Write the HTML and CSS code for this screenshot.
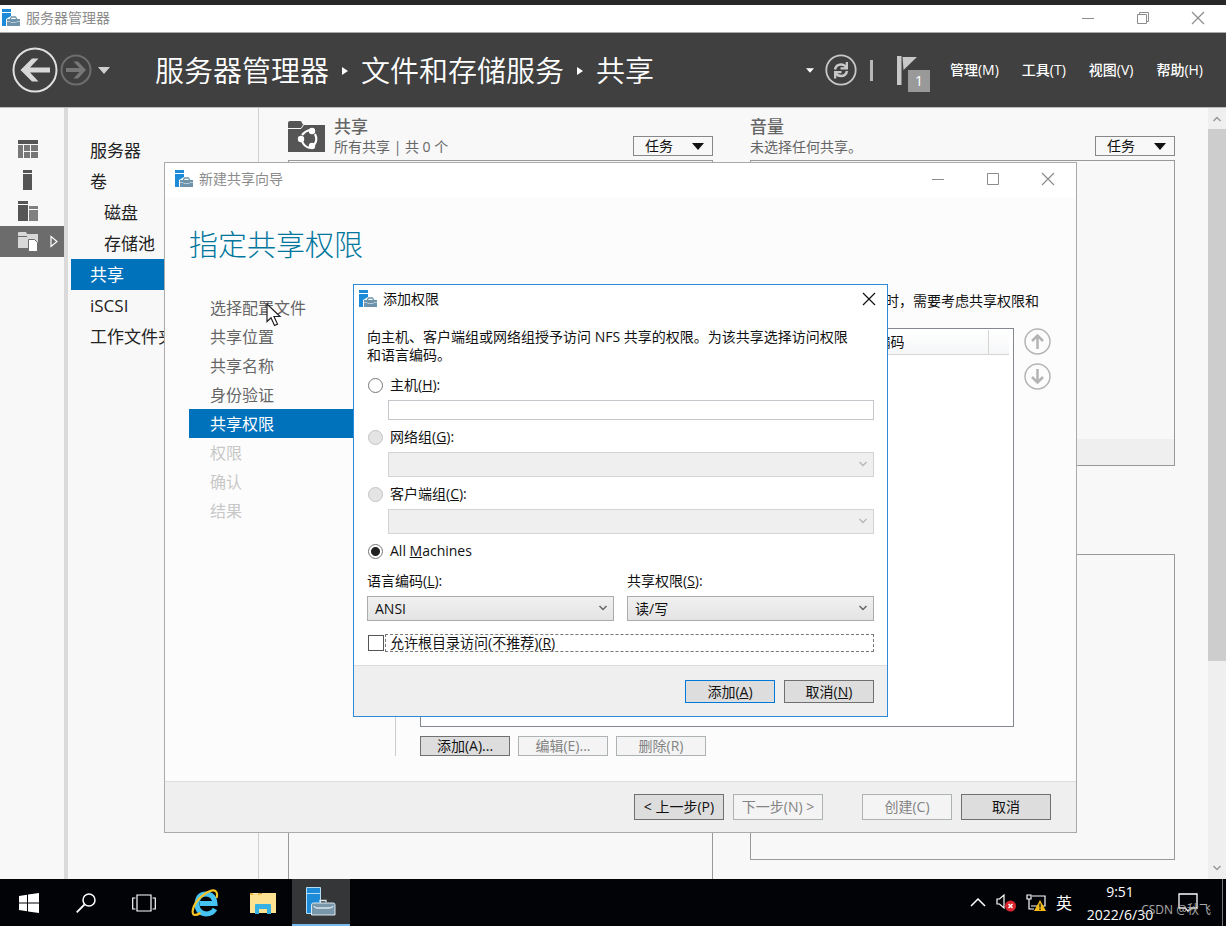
FILE: index.html
```html
<!DOCTYPE html>
<html lang="zh-CN">
<head>
<meta charset="utf-8">
<title>服务器管理器</title>
<link rel="stylesheet" href="styles.css">
</head>
<body>
<svg class="defs" aria-hidden="true">
  <symbol id="app-icon" viewBox="0 0 18 18">
    <path fill="#1e8bd8" d="M0 0h9v3H0zM0 4h9v3L4 10v7H0z"/>
    <path fill="#6f93aa" d="M5 10h13v7H5z"/>
    <path fill="none" stroke="#6f93aa" stroke-width="1.300" d="M8 10.500l1.500-2.500h4l1.500 2.500"/>
    <path fill="none" stroke="#c8d8e2" stroke-width=".8" d="M5 12.500h3l.8 1h5.400l.8-1h3"/>
  </symbol>
  <symbol id="min" viewBox="0 0 14 14"><path fill="none" stroke="currentColor" d="M1 7.500h12"/></symbol>
  <symbol id="max" viewBox="0 0 14 14"><path fill="none" stroke="currentColor" d="M1.500 1.500h11v11h-11z"/></symbol>
  <symbol id="restore" viewBox="0 0 14 14"><path fill="none" stroke="currentColor" d="M1.500 3.500h9v9h-9zM3.500 3.500v-2h9v9h-2"/></symbol>
  <symbol id="close" viewBox="0 0 14 14"><path fill="none" stroke="currentColor" stroke-width="1.200" d="M1 1l12 12M13 1L1 13"/></symbol>
  <symbol id="chev" viewBox="0 0 10 6"><path fill="none" stroke="currentColor" stroke-width="1.500" d="M1.500 1L5 4.500 8.500 1"/></symbol>
  <symbol id="tri" viewBox="0 0 12 7"><path fill="currentColor" d="M0 0h12L6 7z"/></symbol>
</svg>

<div class="desktop">
  <div class="top-strip"></div>
  <header class="titlebar">
    <svg class="app-icon"><use href="#app-icon"/></svg>
    <span class="titlebar-text">服务器管理器</span>
    <button class="win-btn" aria-label="最小化"><svg><use href="#min"/></svg></button>
    <button class="win-btn" aria-label="还原"><svg><use href="#restore"/></svg></button>
    <button class="win-btn" aria-label="关闭"><svg><use href="#close"/></svg></button>
  </header>

  <div class="banner">
    <div class="history">
      <button class="icon-btn" aria-label="后退"><svg width="46" height="46" viewBox="0 0 46 46" fill="none"><circle cx="23" cy="23" r="21.500" stroke="#e0e0e0" stroke-width="2"/><path fill="#d8d8d8" d="M8.500 23L20 11.500h6.500L18 20.500h20v5H18l8.500 9H20z"/></svg></button>
      <button class="icon-btn" aria-label="前进"><svg width="32" height="32" viewBox="0 0 32 32" fill="none"><circle cx="16" cy="16" r="14.500" stroke="#6e6e6e" stroke-width="2"/><path fill="#777" d="M26 16l-8 8.500h-4.500l6-6.500H6v-4h13.500l-6-6.500H18z"/></svg></button>
      <button class="icon-btn history-more" aria-label="历史"><svg width="12" height="7"><use href="#tri"/></svg></button>
    </div>
    <nav class="crumbs">
      <span>服务器管理器</span><i class="crumb-sep"></i><span>文件和存储服务</span><i class="crumb-sep"></i><span>共享</span>
    </nav>
    <div class="banner-tools">
      <button class="icon-btn small-tri" aria-label="更多"><svg width="8" height="5"><use href="#tri"/></svg></button>
      <button class="icon-btn" aria-label="刷新"><svg width="32" height="32" viewBox="0 0 32 32" fill="none" stroke="#c8c8c8"><circle cx="16" cy="16" r="14.700" stroke-width="1.800"/><path stroke-width="2.500" d="M10 15.500q1-5 6-5 3.500 0 5.500 3M22 17q-1 5-6 5-3.500 0-5.500-3"/><path fill="#c8c8c8" stroke="none" d="M23 8v7.500h-7.500v-2.200h5.200V8zM9 24.500V17h7.500v2.200h-5.200v5.300z"/></svg></button>
      <span class="banner-bar"></span>
      <button class="flag icon-btn" aria-label="通知">
        <svg width="22" height="30" viewBox="0 0 22 30"><path fill="#c8c8c8" d="M0 0h4.500v29H0zM5.500 1H20L6.500 14z"/></svg>
        <span class="flag-count">1</span>
      </button>
      <button class="menu-btn">管理(M)</button>
      <button class="menu-btn">工具(T)</button>
      <button class="menu-btn">视图(V)</button>
      <button class="menu-btn">帮助(H)</button>
    </div>
  </div>

  <main class="main">
    <aside class="rail">
      <button class="rail-btn" aria-label="仪表板"><svg width="20" height="18" viewBox="0 0 20 18"><path fill="#555" d="M0 0h20v4H0z"/><path fill="#777" d="M0 5h5v13H0zM6 5h6v6H6zM13 5h7v6h-7zM6 12h6v6H6zM13 12h7v6h-7z"/></svg></button>
      <button class="rail-btn" aria-label="本地服务器"><svg width="20" height="20" viewBox="0 0 20 20"><path fill="#555" d="M5 0h9v3H5zM5 4h9v16H5z"/></svg></button>
      <button class="rail-btn" aria-label="所有服务器"><svg width="20" height="20" viewBox="0 0 20 20"><path fill="#555" d="M0 0h10v3H0zM0 4h10v16H0z"/><path fill="#808080" d="M11 5h9v3h-9zM11 9h9v11h-9z"/></svg></button>
      <button class="rail-btn rail-active" aria-label="文件和存储服务"><svg width="20" height="20" viewBox="0 0 20 20"><path fill="#d8d8d8" d="M0 1q0-1 1-1h7l1 2h11v14H0z"/><path stroke="#6c6c6c" d="M0 4.500h9"/><path fill="#fff" stroke="#6c6c6c" d="M10.500 7.500h6l3 3v9h-9z"/></svg><svg class="rail-arrow" width="8" height="13" viewBox="0 0 8 13"><path fill="none" stroke="#fff" stroke-width="1.200" d="M1 1.500l6 5-6 5z"/></svg></button>
    </aside>
    <nav class="side">
      <a href="#">服务器</a>
      <a href="#">卷</a>
      <a href="#" class="sub">磁盘</a>
      <a href="#" class="sub">存储池</a>
      <a href="#" class="current">共享</a>
      <a href="#">iSCSI</a>
      <a href="#">工作文件夹</a>
    </nav>
    <section class="tiles">
      <div class="tile-col">
        <div class="tile-head">
          <svg class="tile-icon" width="37" height="31" viewBox="0 0 37 31"><path fill="#555" d="M0 2q0-2 2-2h10q2 0 2 2l1 1.500h22V31H0z"/><path fill="none" stroke="#f8f8f8" d="M0 7.500h13l2.500-3.500"/><path fill="#f8f8f8" d="M14.500 0H37v4H15.500z"/><g fill="none" stroke="#fff" stroke-width="2.200"><path d="M14 14q3-4 8-5M27 13q3 6-1 11M22 27q-6-1-8-7"/></g><circle cx="13" cy="18" r="3.200" fill="#fff"/><circle cx="24" cy="10" r="3.200" fill="#fff"/><circle cx="24" cy="25" r="3.200" fill="#fff"/></svg>
          <div class="tile-titles"><h2>共享</h2><p>所有共享 | 共 0 个</p></div>
          <button class="task-btn">任务<svg width="12" height="7"><use href="#tri"/></svg></button>
        </div>
        <div class="tile-box open-end"></div>
      </div>
      <div class="tile-col end-gap">
        <div class="tile-head">
          <div class="tile-titles"><h2>音量</h2><p>未选择任何共享。</p></div>
          <button class="task-btn">任务<svg width="12" height="7"><use href="#tri"/></svg></button>
        </div>
        <div class="tile-box"><div class="tile-status"></div></div>
        <div class="tile-box second"></div>
      </div>
    </section>
    <div class="scroll">
      <svg width="10" height="6" class="flip"><use href="#chev"/></svg>
      <div class="track"><div class="thumb"></div></div>
      <svg width="10" height="6"><use href="#chev"/></svg>
    </div>
  </main>

  <section class="wizard">
    <div class="wizard-bar">
      <svg class="app-icon"><use href="#app-icon"/></svg>
      <span class="titlebar-text">新建共享向导</span>
      <button class="win-btn" aria-label="最小化"><svg><use href="#min"/></svg></button>
      <button class="win-btn" aria-label="最大化"><svg><use href="#max"/></svg></button>
      <button class="win-btn" aria-label="关闭"><svg><use href="#close"/></svg></button>
    </div>
    <h1>指定共享权限</h1>
    <div class="wizard-body">
      <ol class="steps">
        <li>选择配置文件</li>
        <li>共享位置</li>
        <li>共享名称</li>
        <li>身份验证</li>
        <li class="now">共享权限</li>
        <li class="later">权限</li>
        <li class="later">确认</li>
        <li class="later">结果</li>
      </ol>
      <div class="wizard-page">
        <p class="wizard-note">时，需要考虑共享权限和</p>
        <div class="list-row">
          <div class="list">
            <table><thead><tr><th class="code-col">编码</th><th class="end-col"></th></tr></thead></table>
          </div>
          <div class="order">
            <button class="icon-btn" aria-label="上移"><svg width="27" height="27" viewBox="0 0 27 27" fill="none" stroke="#b4b4b4"><circle cx="13.500" cy="13.500" r="12.500" stroke-width="1.500"/><path stroke-width="2.500" d="M13.500 21V8M8 13l5.500-5.500L19 13"/></svg></button>
            <button class="icon-btn" aria-label="下移"><svg width="27" height="27" viewBox="0 0 27 27" fill="none" stroke="#b4b4b4"><circle cx="13.500" cy="13.500" r="12.500" stroke-width="1.500"/><path stroke-width="2.500" d="M13.500 6v13M8 14l5.500 5.500L19 14"/></svg></button>
          </div>
        </div>
        <div class="list-actions">
          <button class="btn">添加(A)...</button>
          <button class="btn" disabled>编辑(E)...</button>
          <button class="btn" disabled>删除(R)</button>
        </div>
      </div>
    </div>
    <footer class="wizard-foot">
      <button class="btn">&lt; 上一步(P)</button>
      <button class="btn" disabled>下一步(N) &gt;</button>
      <button class="btn apart" disabled>创建(C)</button>
      <button class="btn">取消</button>
    </footer>
  </section>

  <form class="dialog">
    <div class="dialog-bar">
      <svg class="app-icon"><use href="#app-icon"/></svg>
      <span>添加权限</span>
      <button type="button" class="win-btn" aria-label="关闭"><svg><use href="#close"/></svg></button>
    </div>
    <div class="dialog-body">
      <p>向主机、客户端组或网络组授予访问 NFS 共享的权限。为该共享选择访问权限和语言编码。</p>
      <div class="field">
        <label class="radio"><input type="radio" name="who"><span>主机(<u>H</u>):</span></label>
        <input class="text" type="text" aria-label="主机">
      </div>
      <div class="field">
        <label class="radio"><input type="radio" name="who" disabled><span>网络组(<u>G</u>):</span></label>
        <div class="combo off"><select disabled aria-label="网络组"><option></option></select><svg width="10" height="6"><use href="#chev"/></svg></div>
      </div>
      <div class="field">
        <label class="radio"><input type="radio" name="who" disabled><span>客户端组(<u>C</u>):</span></label>
        <div class="combo off"><select disabled aria-label="客户端组"><option></option></select><svg width="10" height="6"><use href="#chev"/></svg></div>
      </div>
      <label class="radio"><input type="radio" name="who" checked><span>All <u>M</u>achines</span></label>
      <div class="pair">
        <div class="pair-item"><label for="enc">语言编码(<u>L</u>):</label><div class="combo"><select id="enc"><option>ANSI</option></select><svg width="10" height="6"><use href="#chev"/></svg></div></div>
        <div class="pair-item"><label for="perm">共享权限(<u>S</u>):</label><div class="combo"><select id="perm"><option>读/写</option></select><svg width="10" height="6"><use href="#chev"/></svg></div></div>
      </div>
      <label class="check"><input type="checkbox"><span>允许根目录访问(不推荐)(<u>R</u>)</span></label>
    </div>
    <footer class="dialog-foot">
      <button type="button" class="btn primary">添加(<u>A</u>)</button>
      <button type="button" class="btn">取消(<u>N</u>)</button>
    </footer>
  </form>

  <svg class="pointer" width="16" height="24" viewBox="0 0 16 24"><path fill="#fff" stroke="#222" stroke-width="1.200" d="M1 1v17.500l4-3.800 3.500 7.800 3-1.400L8 13.500h6z"/></svg>

  <footer class="taskbar">
    <button class="task" aria-label="开始"><svg width="20" height="20" viewBox="0 0 20 20" fill="#fff"><path d="M0 3l8-1.200v7.700H0zM9 1.600L20 0v9.500H9zM0 10.500h8v7.700L0 17zM9 10.500h11V20L9 18.400z"/></svg></button>
    <button class="task" aria-label="搜索"><svg width="20" height="20" viewBox="0 0 20 20" fill="none" stroke="#fff"><circle cx="13" cy="7" r="6" stroke-width="1.500"/><path stroke-width="1.800" d="M8.500 11.500L.7 19.300"/></svg></button>
    <button class="task" aria-label="任务视图"><svg width="24" height="18" viewBox="0 0 24 18" fill="none" stroke="#fff" stroke-width="1.200"><path d="M5 1h14v16H5zM3.500 4H.7v11h2.800M20.500 4h2.800v11h-2.800"/></svg></button>
    <button class="task pinned" aria-label="Internet Explorer"><svg width="28" height="28" viewBox="0 0 28 28" fill="none"><path stroke="#45c3f2" stroke-width="5" d="M24 20q-3 5-9 5-9-1-9-10.500Q7 5 15 5q8 0 9 9.500H9"/><path stroke="#f6c526" stroke-width="2.200" d="M25.500 9q1.500-5-1-7C20-.5 8 7 3 17q-3 8 .5 9 3 0 6-2"/></svg></button>
    <button class="task" aria-label="文件资源管理器"><svg width="26" height="22" viewBox="0 0 26 22"><path fill="#e9b73c" d="M0 1h11l1 3H0z"/><path fill="#fde391" d="M0 3h10l2-2h14v20H0z"/><path fill="#fff2c4" d="M3 1h5v1.500H3z"/><path fill="#35b1e5" d="M5 22V13q0-1 1-1h14q1 0 1 1v9h-4v-5H9v5z"/></svg></button>
    <button class="task running" aria-label="服务器管理器"><svg width="30" height="29" viewBox="0 0 30 29"><path fill="#1e8bd8" stroke="#b5dcf5" d="M.5.500h14v26H.5z"/><path stroke="#b5dcf5" d="M1 6.500h13"/><path fill="#7897aa" stroke="#dbe6ee" d="M5.500 18q0-2 2-2h20q1.500 0 1.500 2v10H5.500z"/><path fill="none" stroke="#dbe6ee" stroke-width="1.300" d="M14 15.500v-2h6v2M8 19q1 2 3 2h12q3 0 4-2"/></svg></button>
    <div class="tray">
      <svg width="16" height="9" viewBox="0 0 16 9"><path fill="none" stroke="#fff" stroke-width="1.500" d="M1 8l7-7 7 7"/></svg>
      <svg width="20" height="18" viewBox="0 0 20 18"><path fill="none" stroke="#fff" stroke-width="1.200" d="M1 5h2.500L8 1v13l-4.500-4H1z"/><circle cx="14.500" cy="12" r="5.500" fill="#d9262c"/><path stroke="#fff" stroke-width="1.500" d="M12.500 10l4 4m0-4l-4 4"/></svg>
      <svg width="20" height="18" viewBox="0 0 20 18"><path fill="none" stroke="#fff" stroke-width="1.200" d="M1 1h4v4H1zM3 5v10h5M6 2h13v10H5"/><path fill="#f8bd14" d="M14 6l6 11H8z"/><path stroke="#222" stroke-width="1.500" d="M14 9.500v4M14 14.500V16"/></svg>
      <span class="ime">英</span>
      <div class="clock"><span>9:51</span><span>2022/6/30</span></div>
      <svg width="20" height="20" viewBox="0 0 20 20"><path fill="none" stroke="#fff" stroke-width="1.300" d="M1 1h18v14h-6l-3 3-3-3H1z"/></svg>
      <span class="peek"></span>
    </div>
    <span class="mark">CSDN @秋飞</span>
  </footer>
</div>
</body>
</html>
```

FILE: styles.css
```css
* { box-sizing: border-box; }
body, h1, h2, p, ol { margin: 0; padding: 0; }
body, button, input, select {
  font-family: "Open Sans", "Noto Sans CJK SC", sans-serif;
  font-size: 14px;
  line-height: 18px;
  color: #111;
}
button { border: 0; background: none; padding: 0; }
svg { display: block; flex: none; }
.defs { position: absolute; width: 0; height: 0; }

.desktop {
  position: relative;
  display: flex;
  flex-direction: column;
  min-height: 100vh;
  overflow: hidden;
  background: #f8f8f8;
}
.top-strip { height: 5px; background: #272727; }

/* window title bars */
.titlebar {
  display: flex;
  align-items: center;
  height: 28px;
  padding: 0 1px 2px 2px;
  background: #fff;
  border-bottom: 1px solid #aaa;
}
.app-icon { width: 18px; height: 18px; }
.titlebar-text { flex: 1; padding-left: 6px; color: #8c8c8c; }
.win-btn {
  display: grid;
  place-items: center;
  width: 55px;
  height: 24px;
  color: #8c8c8c;
}
.win-btn svg { width: 14px; height: 14px; }

/* banner */
.banner {
  display: flex;
  align-items: center;
  height: 75px;
  padding: 0 23px 0 12px;
  background: #404040;
  border-bottom: 1px solid #bbb;
  color: #fff;
}
.history { display: flex; align-items: center; width: 143px; gap: 2px; }
.history .history-more { padding-left: 4px; color: #d0d0d0; }
.icon-btn { display: block; color: #fff; }
.crumbs {
  display: flex;
  align-items: center;
  flex: 1;
  padding-top: 2px;
  font-size: 29px;
  font-weight: 350;
  line-height: 40px;
}
.crumb-sep {
  margin: 0 13px;
  border: 4px solid transparent;
  border-left: 6px solid #fff;
  border-right: 0;
}
.banner-tools { display: flex; align-items: center; }
.small-tri { padding-right: 11px; }
.banner-bar { width: 3px; height: 21px; margin: 0 24px 0 13px; background: #b8b8b8; }
.flag { position: relative; width: 34px; height: 40px; margin-right: 19px; }
.flag svg { margin-top: 1px; }
.flag-count {
  position: absolute;
  left: 11px;
  top: 20px;
  width: 22px;
  height: 22px;
  background: #999;
  color: #fff;
  line-height: 22px;
  text-align: center;
}
.menu-btn { color: #fff; font-weight: 500; }
.menu-btn + .menu-btn { margin-left: 23px; }

/* main area */
.main { display: flex; flex: 1; min-height: 0; }
.rail { width: 68px; padding-top: 25px; border-right: 4px solid #dadada; }
.rail-btn {
  display: flex;
  align-items: center;
  gap: 12px;
  width: 100%;
  height: 31px;
  padding-left: 18px;
}
.rail-active { background: #6c6c6c; }
.side {
  width: 191px;
  padding: 27px 0 0 3px;
  border-right: 1px solid #d0d0d0;
}
.side a {
  display: block;
  height: 31px;
  padding-left: 19px;
  color: #222;
  font-size: 17px;
  line-height: 31px;
  text-decoration: none;
}
.side .sub { padding-left: 33px; }
.side .current { background: #0072bc; color: #fff; }
.tiles {
  display: grid;
  grid-template-columns: 1fr 1fr;
  gap: 37px;
  flex: 1;
  padding: 0 33px 0 29px;
}
.tile-col { display: flex; flex-direction: column; }
.end-gap { padding-bottom: 19px; }
.tile-head { display: flex; height: 52px; }
.tile-icon { margin: 13px 9px 0 0; }
.tile-titles { flex: 1; padding-top: 9px; color: #666; }
.tile-titles h2 { font-size: 17px; font-weight: 500; line-height: 20px; }
.tile-titles p { line-height: 20px; }
.task-btn {
  display: flex;
  align-items: center;
  justify-content: space-between;
  align-self: flex-end;
  width: 80px;
  height: 20px;
  margin-bottom: 4px;
  padding: 0 8px 0 11px;
  border: 1px solid #888;
}
.tile-box {
  display: flex;
  flex: 1;
  align-items: flex-end;
  border: 1px solid #999;
}
.open-end { border-bottom: 0; }
.tile-status { flex: 1; height: 26px; background: #efefef; }
.second { margin-top: 88px; }
.scroll {
  display: flex;
  flex-direction: column;
  align-items: center;
  width: 18px;
  padding: 8px 0;
  background: #efefef;
  color: #999;
}
.flip { transform: rotate(180deg); }
.track { flex: 1; width: 100%; padding: 7px 0; }
.thumb { height: 73%; background: #cdcdcd; }

/* shared push button */
.btn {
  width: 90px;
  height: 26px;
  background: #ddd;
  border: 1px solid #707070;
  white-space: nowrap;
}
.btn:disabled { background: #f4f4f4; border-color: #adb2b5; color: #838383; }
.primary { border-color: #0078d7; }

/* wizard window */
.wizard {
  position: absolute;
  left: 164px;
  top: 162px;
  display: flex;
  flex-direction: column;
  width: 913px;
  height: 671px;
  background: #fcfcfc;
  border: 1px solid #aaa;
}
.wizard-bar {
  display: flex;
  align-items: center;
  height: 35px;
  padding: 0 1px 3px 10px;
  background: #fff;
}
.wizard h1 {
  margin-top: 27px;
  padding-left: 24px;
  color: #00769d;
  font-size: 29px;
  font-weight: 300;
  line-height: 40px;
}
.wizard-body { display: flex; flex: 1; padding: 28px 25px 25px 24px; }
.steps {
  width: 207px;
  border-right: 1px solid #ccc;
  list-style: none;
}
.steps li {
  padding: 2px 0 0 21px;
  color: #666;
  font-size: 16px;
  line-height: 27px;
}
.steps .now { background: #0072bc; color: #fff; }
.steps .later { color: #c8c8c8; }
.wizard-page {
  display: flex;
  flex: 1;
  flex-direction: column;
  padding-left: 24px;
}
.wizard-note { padding-right: 12px; line-height: 16px; text-align: right; }
.list-row { display: flex; flex: 1; gap: 10px; margin: 19px 0 9px; }
.list { flex: 1; padding: 1px 4px 0 1px; background: #fff; border: 1px solid #828790; }
.list table { width: 100%; border-collapse: collapse; }
.list th {
  height: 24px;
  padding: 0;
  background: linear-gradient(#fff, #f5f6f7);
  border-bottom: 1px solid #d5d5d5;
  font-weight: 400;
}
.code-col { border-right: 1px solid #d5d5d5; text-align: right; }
.list .code-col { padding-right: 83px; }
.end-col { width: 21px; }
.order { display: flex; flex-direction: column; gap: 8px; }
.list-actions { display: flex; gap: 8px; }
.list-actions .btn { height: 20px; }
.wizard-foot {
  display: flex;
  gap: 9px;
  justify-content: flex-end;
  padding: 12px 25px;
  background: #efefef;
  border-top: 1px solid #ddd;
}
.apart { margin-left: 30px; }

/* permission dialog */
.dialog {
  position: absolute;
  left: 353px;
  top: 284px;
  width: 535px;
  background: #fff;
  border: 1px solid #2d8ad8;
}
.dialog-bar {
  display: flex;
  align-items: center;
  height: 29px;
  padding: 0 0 2px 5px;
}
.dialog-bar span { flex: 1; padding-left: 6px; }
.dialog-bar .win-btn { width: 36px; color: #111; }
.dialog-body { padding: 14px 13px 12px; }
.field { margin-bottom: 7px; }
.dialog-body > p { margin-bottom: 11px; padding-right: 20px; }
.radio { display: flex; align-items: center; gap: 7px; height: 20px; }
.radio input {
  width: 15px;
  height: 15px;
  margin: 0 0 0 1px;
  appearance: none;
  background: #fff;
  border: 1px solid #777;
  border-radius: 50%;
}
.radio input:checked { background: radial-gradient(circle, #222 4px, #fff 5px); }
.radio input:disabled { background: #e4e4e4; border-color: #c4c4c4; }
.text {
  display: block;
  width: calc(100% - 21px);
  height: 20px;
  margin: 5px 0 0 21px;
  border: 1px solid #c4c8cc;
}
.combo { display: grid; align-items: center; margin-top: 5px; color: #666; }
.combo > * { grid-area: 1 / 1; }
.combo select {
  width: 100%;
  height: 25px;
  padding: 0 7px;
  appearance: none;
  background: linear-gradient(#f0f0f0, #e4e4e4);
  border: 1px solid #acacac;
  border-radius: 0;
}
.combo svg { justify-self: end; margin: 0 6px 2px 0; pointer-events: none; }
.off { margin-left: 21px; color: #b8b8b8; }
.combo.off select { background: #efefef; border-color: #d4d4d4; opacity: 1; }
.pair {
  display: grid;
  grid-template-columns: 1fr 1fr;
  gap: 13px;
  margin: 10px 0 12px;
}
.pair-item > label { display: block; line-height: 20px; }
.check { display: flex; align-items: center; height: 20px; }
.check input {
  width: 16px;
  height: 16px;
  margin: 0 1px;
  appearance: none;
  background: #fff;
  border: 1px solid #555;
}
.check span { flex: 1; padding-left: 4px; border: 1px dashed #777; line-height: 16px; }
.dialog-foot {
  display: flex;
  gap: 9px;
  justify-content: flex-end;
  padding: 14px 13px 13px;
  background: #efefef;
  border-top: 1px solid #ddd;
}
.dialog-foot .btn { height: 23px; }
.pointer { position: absolute; left: 266px; top: 303px; }

/* taskbar */
.taskbar {
  position: relative;
  display: flex;
  height: 47px;
  background: #020307;
  color: #fff;
}
.task { display: grid; place-items: center; width: 58px; }
.task:first-child { width: 57px; }
.pinned { margin-left: 3px; }
.running { background: #343638; border-bottom: 2px solid #76b9ed; }
.tray { display: flex; align-items: center; gap: 10px; margin-left: auto; }
.ime { font-size: 16px; }
.clock {
  display: flex;
  flex-direction: column;
  width: 72px;
  line-height: 23px;
  text-align: center;
}
.tray .clock { margin: 0 12px 0 2px; }
.peek { width: 1px; height: 47px; margin: 0 3px 0 14px; background: #777; }
.mark {
  position: absolute;
  right: 15px;
  bottom: 8px;
  color: #aaa;
  font-size: 12px;
  line-height: 16px;
}
```
